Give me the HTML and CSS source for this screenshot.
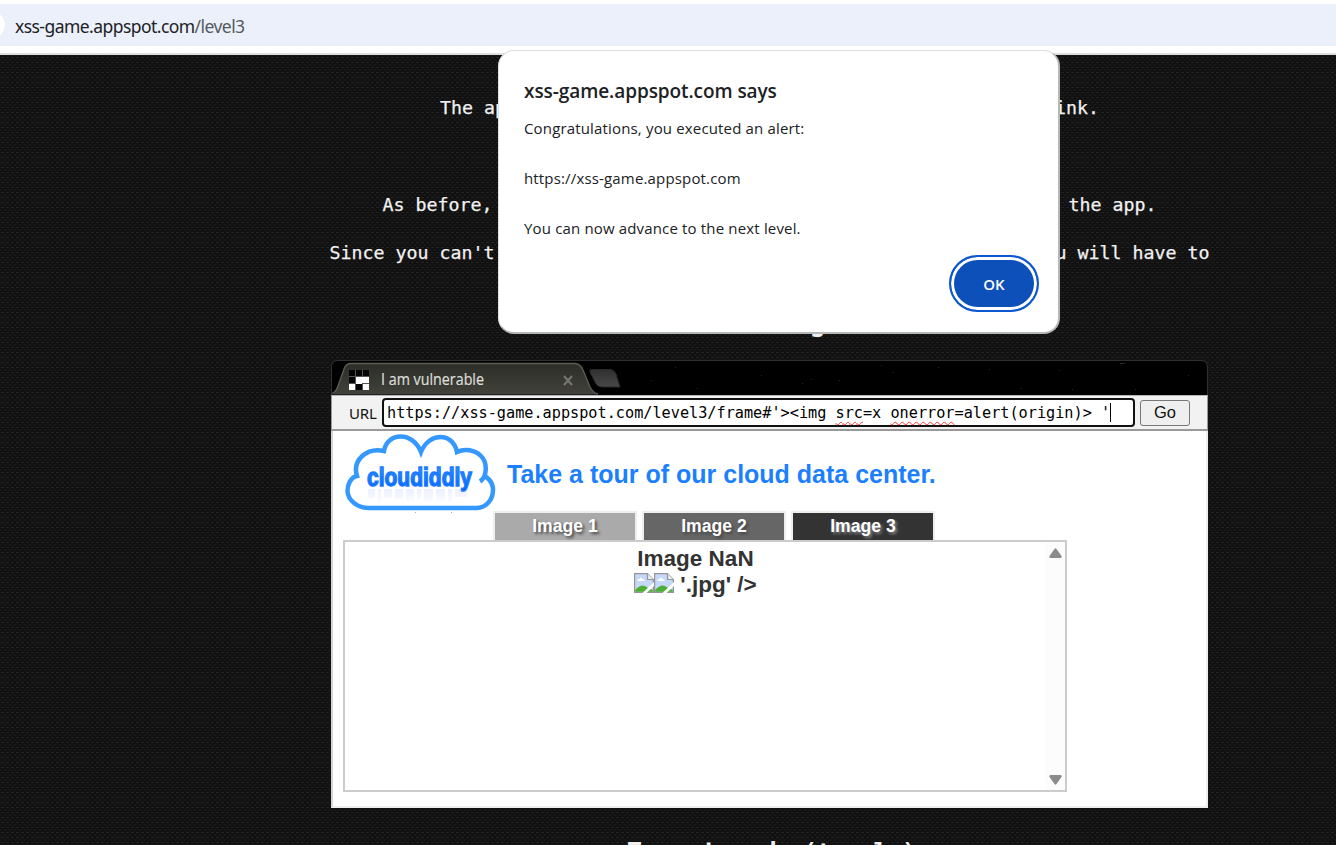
FILE: index.html
```html
<!DOCTYPE html>
<html lang="en">
<head>
<meta charset="utf-8">
<title>XSS game: Level 3</title>
<link rel="stylesheet" href="styles.css">
</head>
<body>
<header class="toolbar"><div class="omnibox"><span class="site-chip"></span><span class="address">xss-game.appspot.com<span class="path">/level3</span></span></div></header>
<main class="page">
  <p class="line line-app"><span>The ap</span><span>link.</span></p>
  <p class="line line-before"><span>As before,</span><span>the app.</span></p>
  <p class="line line-since"><span>Since you can't</span><span>u will have to</span></p>
  <h2 class="target-heading">g</h2>
  <section class="browser">
    <svg class="tabstrip" width="877" height="35" viewBox="0 0 877 35">
      <defs>
        <linearGradient id="tab" x1="0" y1="0" x2="0" y2="1"><stop offset="0" stop-color="#2d2d29"/><stop offset="1" stop-color="#42423b"/></linearGradient>
        <linearGradient id="newtab" x1="0" y1="0" x2="0" y2="1"><stop offset="0" stop-color="#303030"/><stop offset="1" stop-color="#484848"/></linearGradient>
      </defs>
      <path d="M.5 35V7Q.5.500 7 .5H870Q876.500.5 876.500 7V35" fill="#000" stroke="#303030"/>
      <path d="M1 34.500Q5 32 7 26L13 9Q15 3.500 20 3.500H244Q249 3.500 252 10L259 27Q262 33 267 34.500Z" fill="url(#tab)"/>
      <path d="M1 33.500Q5 32 7 26L13 9Q15 3.500 20 3.500H244Q249 3.500 252 10L259 27Q262 33 267 34" fill="none" stroke="#5e5e56" stroke-width="1.300"/>
      <path d="M261 9.500H280Q283 10 285 14L289 27H272Q266 27 264 22L259 12Q258 9.500 261 9.500Z" fill="url(#newtab)" stroke="#292929"/>
      <path d="M18 10h20v20H18z" fill="#050505"/>
      <path d="M24 10h1v20h-1zM31 10h1v20h-1zM18 16h20v1H18zM18 23h20v1H18z" fill="#555"/>
      <path d="M25 17h13v6H25zM18 24h6v6h-6zM32 24h6v6h-6zM25 23h6v1h-6z" fill="#fff"/>
      <text class="tab-title" x="50" y="25" textLength="103" lengthAdjust="spacingAndGlyphs">I am vulnerable</text>
      <path d="M233 16l8 9m0-9l-8 9" stroke="#77776f" stroke-width="2"/>
      <path fill="#292929" d="M320 20h1v1h-1zM344 7h1v1h-1zM366 28h1v1h-1zM430 15h1v1h-1zM471 23h1v1h-1zM480 19h1v1h-1zM508 20h1v1h-1zM550 5h1v1h-1zM562 12h1v1h-1zM607 7h1v1h-1zM658 9h1v1h-1zM690 28h1v1h-1zM728 10h1v1h-1zM741 29h1v1h-1zM789 3h5v1h-5zM804 29h1v1h-1zM857 15h1v1h-1z"/>
    </svg>
    <div class="urlbar">
      <span class="url-label">URL</span>
      <div class="url-input">https://xss-game.appspot.com/level3/frame#'&gt;&lt;img <span class="misspelt">src</span>=x <span class="misspelt">onerror</span>=alert(origin)&gt; '<i class="caret"></i></div>
      <button class="go">Go</button>
    </div>
    <div class="frame">
      <div class="brand">
        <svg class="cloud" width="152" height="82" viewBox="0 0 152 82">
          <defs>
            <linearGradient id="word" x1="0" y1="0" x2="0" y2="1"><stop offset="0" stop-color="#399bff"/><stop offset="1" stop-color="#005cff"/></linearGradient>
            <linearGradient id="fade" x1="0" y1="0" x2="0" y2="1"><stop offset="0" stop-color="#fff" stop-opacity=".6"/><stop offset="1" stop-color="#fff"/></linearGradient>
          </defs>
          <g fill="#c9d8ff"><path d="M23 56h7v9h-7zM33 56h3v14h-3zM39 56h8v9h-8zM50 56h8v10h-8zM61 56h8v12h-8zM72 56h4v10h-4zM79 56h9v13h-9zM91 56h9v13h-9zM103 56h4v13h-4zM110 56h12v8h-12z"/></g>
          <path d="M20 55h108v17H20z" fill="url(#fade)"/>
          <path d="M135 48.500C142 44 143 30 136 23C130 17 120 15 112 19C108-1 84-1 76 19C68-2 42-1 39 18C22 14 7 27 12 43C6 44 2.500 51 2.500 58C3 68 13 75 24 75H131C141 75 148 67 148 57C148 48 141 43 138 43" fill="none" stroke="#3498ff" stroke-width="4.500"/>
          <text class="cloud-word" x="22" y="53" textLength="105" lengthAdjust="spacingAndGlyphs" fill="url(#word)" stroke="#187aff">cloudiddly</text>
          <path d="M70 79h1v1h-1zM106 79h1v1h-1z" fill="#aaa"/>
        </svg>
        <h1 class="tour">Take a tour of our cloud data center.</h1>
      </div>
      <div class="tabs"><div class="tab tab-one">Image 1</div><div class="tab tab-two">Image 2</div><div class="tab tab-three">Image 3</div></div>
      <div class="viewer">
        <div class="result">
          <div>Image NaN</div>
          <div class="broken-row"><svg class="broken" viewBox="0 0 20 20"><use href="#broken"/></svg><svg class="broken" viewBox="0 0 20 20"><use href="#broken"/></svg><span class="tail">'.jpg' /&gt;</span></div>
        </div>
        <div class="scrollbar">
          <svg width="13" height="10" viewBox="0 0 13 10"><path d="M5.500 1Q6.500-.5 7.500 1L12.500 8Q13 10 11.500 10H1.500Q0 10 .5 8Z" fill="#8b8b8b"/></svg>
          <svg width="13" height="10" viewBox="0 0 13 10"><path d="M5.500 9Q6.500 10.500 7.500 9L12.500 2Q13 0 11.500 0H1.500Q0 0 .5 2Z" fill="#8b8b8b"/></svg>
        </div>
      </div>
    </div>
  </section>
  <h2 class="code-heading"><span>Target code</span><span class="toggle">(toggle)</span></h2>
</main>
<svg class="symbols" width="0" height="0"><symbol id="broken" viewBox="0 0 20 20"><path d="M.6.600H13.500L19.400 6.500V19.400H.6Z" fill="#c5d8f7" stroke="#969696" stroke-width="1.200"/><path d="M13.500.6V6.500H19.400" fill="#eee" stroke="#969696" stroke-width="1.200"/><path d="M3.500 8Q3 6 5.500 6Q7 3 8.500 6Q11 6 10.500 8Z" fill="#fff"/><path d="M1.200 18.800V17Q8 9 14 15L18.800 17V18.800Z" fill="#4fae35"/><path d="M8.500 20L20 9V13L12.500 20Z" fill="#fff"/></symbol></svg>
<div class="dialog" role="dialog">
  <h3 class="dialog-title">xss-game.appspot.com says</h3>
  <p class="msg msg-one">Congratulations, you executed an alert:</p>
  <p class="msg msg-two">https://xss-game.appspot.com</p>
  <p class="msg msg-three">You can now advance to the next level.</p>
  <button class="ok">OK</button>
</div>
</body>
</html>
```
FILE: styles.css
```css
* { box-sizing: border-box; }
body { margin: 0; height: 845px; overflow: hidden; position: relative; background: #fff; display: flex; flex-direction: column; }
h1, h2, h3, p { margin: 0; }
.toolbar { height: 55px; flex: none; padding-top: 4px; border-bottom: 2px solid #dedede; }
.omnibox { height: 42px; background: #ebf0fa; display: flex; align-items: center; }
.site-chip { width: 15px; height: 28px; flex: none; background: radial-gradient(circle at -9px 14px, #fff 13.500px, transparent 14px); }
.address { font: 17.500px/42px "Noto Sans", sans-serif; letter-spacing: -.55px; color: #202124; white-space: nowrap; padding-top: 1px; }
.path { color: #555a60; }
.page {
  height: 790px; flex: none; overflow: hidden; display: flex; flex-direction: column; align-items: center; padding-left: 203px;
  background-color: #101010;
  background-image: radial-gradient(ellipse 2px 1px at 50% 50%, #242424 90%, transparent), radial-gradient(ellipse 2px 1px at 50% 50%, #202020 90%, transparent);
  background-size: 5px 5px; background-position: 0 0, 2.500px 2.500px;
}
.line { display: flex; justify-content: space-between; flex: none; height: 24px; font: 18.270px/24px "DejaVu Sans Mono", monospace; color: #f2f2f2; white-space: pre; -webkit-text-stroke: .25px #f2f2f2; }
.line-app { width: 659px; margin-top: 41px; }
.line-before { width: 774px; margin-top: 73px; }
.line-since { width: 880px; margin-top: 24px; }
.target-heading { font: bold 26.500px/34px "DejaVu Sans Mono", monospace; color: #efefef; height: 34px; margin: 40px 0 21px 96px; flex: none; }
.browser { width: 877px; height: 448px; flex: none; display: flex; flex-direction: column; }
.tabstrip { display: block; flex: none; }
.tab-title { font: 16px "Open Sans", sans-serif; fill: #dedfd9; stroke: #dedfd9; stroke-width: .2px; }
.urlbar { height: 36px; flex: none; background: #f2f2f2; border: 1px solid #999; border-top-color: #b5b5b5; border-bottom: 2px solid #999; display: flex; align-items: center; padding-left: 17px; }
.url-label { width: 33px; font: 15px "Noto Sans", sans-serif; color: #111; letter-spacing: -.2px; }
.url-input { width: 753px; height: 29px; border: 2px solid #111; border-radius: 4px; background: #fff; padding-left: 3px; font: 15.210px/26px "DejaVu Sans Mono", monospace; white-space: pre; color: #000; }
.misspelt { text-decoration: underline wavy #f33 1px; text-underline-offset: 3px; }
.caret { display: inline-block; width: 1px; height: 19px; background: #000; vertical-align: -4px; }
.go { width: 50px; height: 26px; padding: 0; margin-left: 5px; border: 1px solid #777; border-radius: 3px; background: #efefef; font: 16.500px "Liberation Sans", sans-serif; color: #111; }
.frame { flex: 1; background: #fff; border: 2px solid #eee; border-top: 0; border-left-color: #d5d5d5; padding-left: 10px; }
.brand { display: flex; height: 80px; }
.cloud { flex: none; margin: 2px 0 0 2px; }
.cloud-word { font: bold 25px "Liberation Sans Narrow", "Liberation Sans", sans-serif; stroke-width: 1.400px; }
.tour { font: bold 25px/30px "Liberation Sans", sans-serif; color: #1b7fff; margin: 28px 0 0 10px; white-space: nowrap; }
.tabs { display: flex; gap: 5px; margin-left: 150px; height: 29px; }
.tab { width: 144px; height: 29px; border: 2px solid #eee; border-bottom: 0; color: #fff; font: bold 17.600px/27px "Liberation Sans", sans-serif; text-align: center; text-shadow: 2px 2px 3px #444; }
.tab-one { background: #aaa; }
.tab-two { background: #666; }
.tab-three { background: #333; text-shadow: 2px 2px 3px #888; }
.viewer { width: 724px; height: 252px; border: 2px solid #ccc; display: flex; }
.result { flex: 1; padding-top: 4px; text-align: center; font: bold 22.500px/26px "Liberation Sans", sans-serif; color: #333; }
.broken-row { display: flex; justify-content: center; }
.broken { width: 20px; height: 20px; margin-top: 1px; }
.tail { margin-left: 6px; }
.scrollbar { width: 19px; background: #fcfcfc; padding: 6px 0 5px 3px; display: flex; flex-direction: column; justify-content: space-between; }
.code-heading { flex: none; display: flex; align-items: baseline; width: 300px; margin: 25px 0 0 15px; font: bold 24.900px/38px "DejaVu Sans Mono", monospace; color: #efefef; white-space: pre; }
.toggle { font-size: 23.500px; margin-left: 11px; }
.symbols { position: absolute; }
.dialog { position: absolute; left: 498px; top: 50px; width: 562px; height: 284px; background: #fff; border: 1px solid #dedede; border-right: 2px solid #b3b7b5; border-bottom: 2px solid #b3b7b5; border-radius: 16px; padding: 26px 19px 0 25px; color: #202124; font-family: "Open Sans", sans-serif; display: flex; flex-direction: column; white-space: nowrap; }
.dialog-title { font: 600 19px/28px "Open Sans", sans-serif; letter-spacing: -.08px; margin-bottom: 11px; }
.msg { font-size: 15px; line-height: 25px; margin-bottom: 25px; letter-spacing: .16px; }
.msg-three { margin-bottom: 14px; }
.ok { align-self: flex-end; width: 90px; height: 57px; flex: none; border: 2px solid #0b57d0; border-radius: 29px; background: #0d50b9; box-shadow: inset 0 0 0 3px #fff; color: #fff; font: 600 15px "Open Sans", sans-serif; padding: 0; }
```
